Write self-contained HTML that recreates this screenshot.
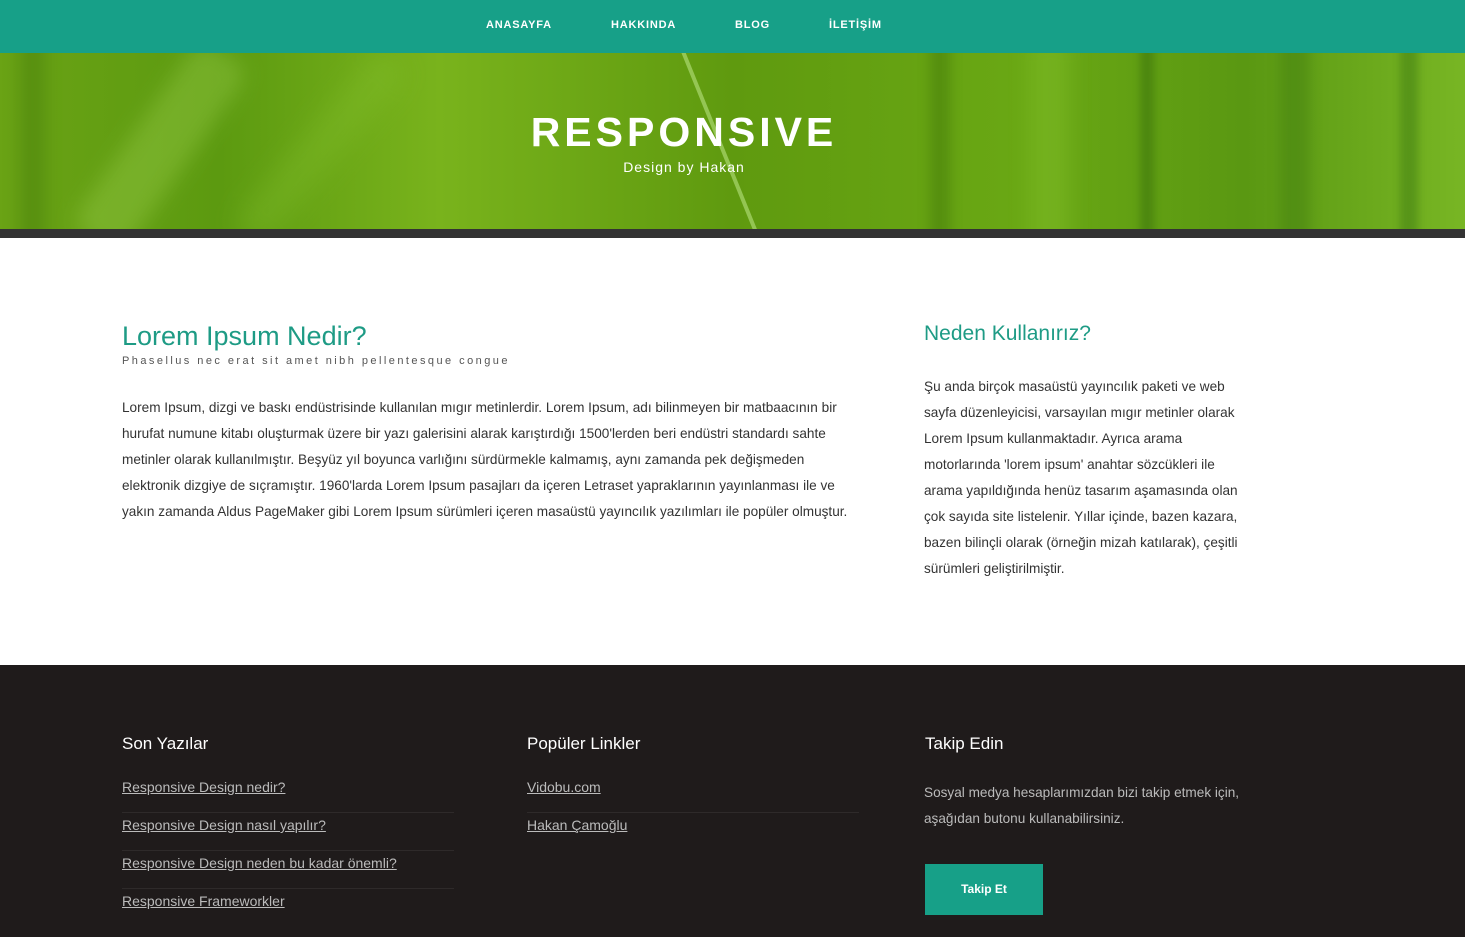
<!DOCTYPE html>
<html><head><meta charset="utf-8"><style>
*{margin:0;padding:0;box-sizing:border-box}
body{width:1465px;height:937px;overflow:hidden;font-family:"Liberation Sans",Arial,sans-serif;background:#fff;color:#333}
.nav{height:53px;background:#17a088;position:relative}
.nav a{position:absolute;top:19px;color:#fff;font-size:11px;font-weight:bold;letter-spacing:0.8px;text-decoration:none}
.hero{height:176px;position:relative;overflow:hidden;background:linear-gradient(90deg,#6aa315 0%,#5c9a10 15%,#79b31c 30%,#5f9a0f 50%,#6aa814 70%,#5a9812 85%,#78b624 100%)}
.s{position:absolute;top:-20px;height:230px;border-radius:20px}
.bar{height:9px;background:#333}
h1{position:absolute;left:0;width:1368px;top:56px;text-align:center;color:#fff;font-size:41px;letter-spacing:4px;font-weight:bold}
.sub{position:absolute;left:0;width:1368px;top:106px;text-align:center;color:#fff;font-size:14px;letter-spacing:1px}
.main{height:427px;position:relative}
.t{color:#1e9b85;font-weight:normal}
p{font-size:14px;line-height:26px;color:#333}
.foot{height:272px;background:#1f1b1b;position:relative;color:#fff}
.foot h3{font-weight:normal;font-size:17px;color:#fff;position:absolute;top:69px}
.foot ul{list-style:none;position:absolute;top:110px;width:332px}
.foot li{height:38px;border-bottom:1px solid #2e2a2a;font-size:14px;line-height:24px}
.foot li:last-child{border:none}
.foot li span{color:#bbb;text-decoration:underline}
</style></head><body>
<div class="nav">
<a style="left:486px">ANASAYFA</a><a style="left:611px">HAKKINDA</a><a style="left:735px">BLOG</a><a style="left:829px">İLETİŞİM</a>
</div>
<div class="hero">
<div class="s" style="left:20px;width:25px;background:rgba(40,90,5,.25);filter:blur(8px)"></div>
<div class="s" style="left:130px;width:60px;background:rgba(170,220,90,.3);transform:rotate(35deg);filter:blur(10px)"></div>
<div class="s" style="left:300px;width:40px;background:rgba(140,200,50,.25);transform:rotate(40deg);filter:blur(12px)"></div>
<div class="s" style="left:720px;width:4px;background:rgba(200,240,150,.5);transform:rotate(-22deg)"></div>
<div class="s" style="left:930px;width:20px;background:rgba(30,80,5,.25);filter:blur(6px)"></div>
<div class="s" style="left:1030px;width:40px;background:rgba(150,210,60,.25);filter:blur(10px)"></div>
<div class="s" style="left:1140px;width:14px;background:rgba(30,80,5,.3);filter:blur(4px)"></div>
<div class="s" style="left:1280px;width:30px;background:rgba(40,100,10,.25);filter:blur(6px)"></div>
<div class="s" style="left:1400px;width:18px;background:rgba(30,90,10,.3);filter:blur(4px)"></div>
<h1>RESPONSIVE</h1>
<div class="sub">Design by Hakan</div>
</div>
<div class="bar"></div>
<div class="main">
<div style="position:absolute;left:122px;top:82px;width:740px">
<h2 class="t" style="font-size:27px;line-height:32px">Lorem Ipsum Nedir?</h2>
<div style="font-size:11px;letter-spacing:2.45px;color:#555;margin-top:3px">Phasellus nec erat sit amet nibh pellentesque congue</div>
<p style="margin-top:28px;font-size:13.6px">Lorem Ipsum, dizgi ve baskı endüstrisinde kullanılan mıgır metinlerdir. Lorem Ipsum, adı bilinmeyen bir matbaacının bir hurufat numune kitabı oluşturmak üzere bir yazı galerisini alarak karıştırdığı 1500'lerden beri endüstri standardı sahte metinler olarak kullanılmıştır. Beşyüz yıl boyunca varlığını sürdürmekle kalmamış, aynı zamanda pek değişmeden elektronik dizgiye de sıçramıştır. 1960'larda Lorem Ipsum pasajları da içeren Letraset yapraklarının yayınlanması ile ve yakın zamanda Aldus PageMaker gibi Lorem Ipsum sürümleri içeren masaüstü yayıncılık yazılımları ile popüler olmuştur.</p>
</div>
<div style="position:absolute;left:924px;top:82px;width:325px">
<h2 class="t" style="font-size:21px;line-height:28px">Neden Kullanırız?</h2>
<p style="margin-top:26px;font-size:13.6px">Şu anda birçok masaüstü yayıncılık paketi ve web sayfa düzenleyicisi, varsayılan mıgır metinler olarak Lorem Ipsum kullanmaktadır. Ayrıca arama motorlarında 'lorem ipsum' anahtar sözcükleri ile arama yapıldığında henüz tasarım aşamasında olan çok sayıda site listelenir. Yıllar içinde, bazen kazara, bazen bilinçli olarak (örneğin mizah katılarak), çeşitli sürümleri geliştirilmiştir.</p>
</div>
</div>
<div class="foot">
<h3 style="left:122px">Son Yazılar</h3>
<ul style="left:122px">
<li><span>Responsive Design nedir?</span></li>
<li><span>Responsive Design nasıl yapılır?</span></li>
<li><span>Responsive Design neden bu kadar önemli?</span></li>
<li><span>Responsive Frameworkler</span></li>
</ul>
<h3 style="left:527px">Popüler Linkler</h3>
<ul style="left:527px">
<li><span>Vidobu.com</span></li>
<li><span>Hakan Çamoğlu</span></li>
</ul>
<h3 style="left:925px">Takip Edin</h3>
<p style="position:absolute;left:924px;top:115px;width:340px;color:#bbb;font-size:13.6px">Sosyal medya hesaplarımızdan bizi takip etmek için, aşağıdan butonu kullanabilirsiniz.</p>
<div style="position:absolute;left:925px;top:199px;width:118px;height:51px;background:#17a088;color:#fff;font-size:12px;font-weight:bold;text-align:center;line-height:51px">Takip Et</div>
</div>
</body></html>
